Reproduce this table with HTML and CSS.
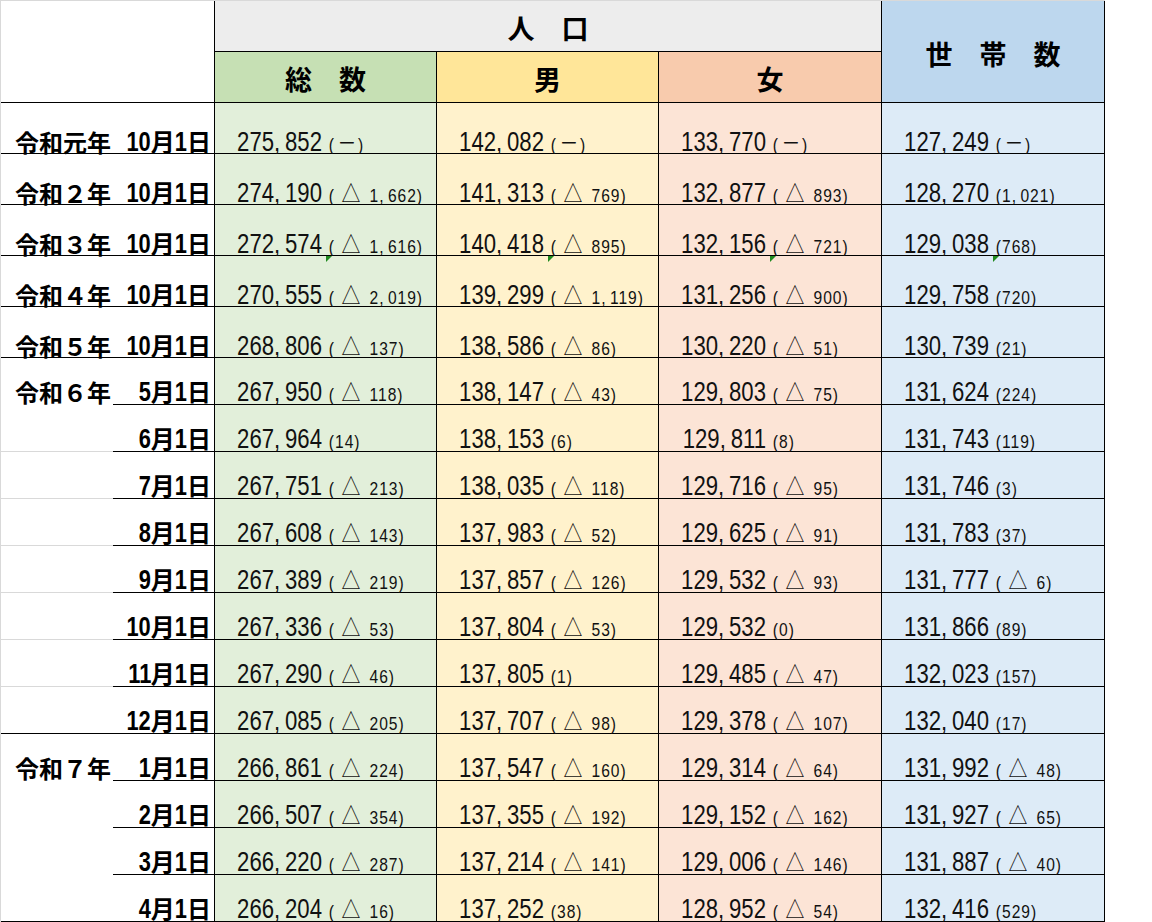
FILE: index.html
```html
<!DOCTYPE html>
<html lang="ja">
<head>
<meta charset="utf-8">
<title>人口・世帯数の推移</title>
<link rel="stylesheet" href="styles.css">
</head>
<body>
<div class="sheet">
  <div class="corner"></div>
  <div class="hd pop">人　口</div>
  <div class="hd hh">世　帯　数</div>
  <div class="hd tot">総　数</div>
  <div class="hd m">男</div>
  <div class="hd f">女</div>

  <div class="yr">令和元年</div><div class="dt"><span class="dg dg2">10</span>月<span class="dg dg1">1</span>日</div>
  <div class="d g"><span class="n">275<i>,</i>852</span><span class="p">(<b class="z">－</b>)</span></div>
  <div class="d y"><span class="n">142<i>,</i>082</span><span class="p">(<b class="z">－</b>)</span></div>
  <div class="d r"><span class="n">133<i>,</i>770</span><span class="p">(<b class="z">－</b>)</span></div>
  <div class="d b"><span class="n">127<i>,</i>249</span><span class="p">(<b class="z">－</b>)</span></div>

  <div class="yr">令和２年</div><div class="dt"><span class="dg dg2">10</span>月<span class="dg dg1">1</span>日</div>
  <div class="d g"><span class="n">274<i>,</i>190</span><span class="p">(<b class="t">△</b>1<i>,</i>662)</span></div>
  <div class="d y"><span class="n">141<i>,</i>313</span><span class="p">(<b class="t">△</b>769)</span></div>
  <div class="d r"><span class="n">132<i>,</i>877</span><span class="p">(<b class="t">△</b>893)</span></div>
  <div class="d b"><span class="n">128<i>,</i>270</span><span class="p">(1<i>,</i>021)</span></div>

  <div class="yr">令和３年</div><div class="dt"><span class="dg dg2">10</span>月<span class="dg dg1">1</span>日</div>
  <div class="d g"><span class="n">272<i>,</i>574</span><span class="p">(<b class="t">△</b>1<i>,</i>616)</span></div>
  <div class="d y"><span class="n">140<i>,</i>418</span><span class="p">(<b class="t">△</b>895)</span></div>
  <div class="d r"><span class="n">132<i>,</i>156</span><span class="p">(<b class="t">△</b>721)</span></div>
  <div class="d b"><span class="n">129<i>,</i>038</span><span class="p">(768)</span></div>

  <div class="yr">令和４年</div><div class="dt"><span class="dg dg2">10</span>月<span class="dg dg1">1</span>日</div>
  <div class="d g e"><span class="n">270<i>,</i>555</span><span class="p">(<b class="t">△</b>2<i>,</i>019)</span></div>
  <div class="d y e"><span class="n">139<i>,</i>299</span><span class="p">(<b class="t">△</b>1<i>,</i>119)</span></div>
  <div class="d r e"><span class="n">131<i>,</i>256</span><span class="p">(<b class="t">△</b>900)</span></div>
  <div class="d b e"><span class="n">129<i>,</i>758</span><span class="p">(720)</span></div>

  <div class="yr">令和５年</div><div class="dt"><span class="dg dg2">10</span>月<span class="dg dg1">1</span>日</div>
  <div class="d g"><span class="n">268<i>,</i>806</span><span class="p">(<b class="t">△</b>137)</span></div>
  <div class="d y"><span class="n">138<i>,</i>586</span><span class="p">(<b class="t">△</b>86)</span></div>
  <div class="d r"><span class="n">130<i>,</i>220</span><span class="p">(<b class="t">△</b>51)</span></div>
  <div class="d b"><span class="n">130<i>,</i>739</span><span class="p">(21)</span></div>

  <div class="yr nb mo">令和６年</div><div class="dt mo"><span class="dg dg1">5</span>月<span class="dg dg1">1</span>日</div>
  <div class="d g mo"><span class="n">267<i>,</i>950</span><span class="p">(<b class="t">△</b>118)</span></div>
  <div class="d y mo"><span class="n">138<i>,</i>147</span><span class="p">(<b class="t">△</b>43)</span></div>
  <div class="d r mo"><span class="n">129<i>,</i>803</span><span class="p">(<b class="t">△</b>75)</span></div>
  <div class="d b mo"><span class="n">131<i>,</i>624</span><span class="p">(224)</span></div>

  <div class="yr gb mo"></div><div class="dt mo"><span class="dg dg1">6</span>月<span class="dg dg1">1</span>日</div>
  <div class="d g mo"><span class="n">267<i>,</i>964</span><span class="p">(14)</span></div>
  <div class="d y mo"><span class="n">138<i>,</i>153</span><span class="p">(6)</span></div>
  <div class="d r mo"><span class="n">129<i>,</i>811</span><span class="p">(8)</span></div>
  <div class="d b mo"><span class="n">131<i>,</i>743</span><span class="p">(119)</span></div>

  <div class="yr gb mo"></div><div class="dt mo"><span class="dg dg1">7</span>月<span class="dg dg1">1</span>日</div>
  <div class="d g mo"><span class="n">267<i>,</i>751</span><span class="p">(<b class="t">△</b>213)</span></div>
  <div class="d y mo"><span class="n">138<i>,</i>035</span><span class="p">(<b class="t">△</b>118)</span></div>
  <div class="d r mo"><span class="n">129<i>,</i>716</span><span class="p">(<b class="t">△</b>95)</span></div>
  <div class="d b mo"><span class="n">131<i>,</i>746</span><span class="p">(3)</span></div>

  <div class="yr gb mo"></div><div class="dt mo"><span class="dg dg1">8</span>月<span class="dg dg1">1</span>日</div>
  <div class="d g mo"><span class="n">267<i>,</i>608</span><span class="p">(<b class="t">△</b>143)</span></div>
  <div class="d y mo"><span class="n">137<i>,</i>983</span><span class="p">(<b class="t">△</b>52)</span></div>
  <div class="d r mo"><span class="n">129<i>,</i>625</span><span class="p">(<b class="t">△</b>91)</span></div>
  <div class="d b mo"><span class="n">131<i>,</i>783</span><span class="p">(37)</span></div>

  <div class="yr gb mo"></div><div class="dt mo"><span class="dg dg1">9</span>月<span class="dg dg1">1</span>日</div>
  <div class="d g mo"><span class="n">267<i>,</i>389</span><span class="p">(<b class="t">△</b>219)</span></div>
  <div class="d y mo"><span class="n">137<i>,</i>857</span><span class="p">(<b class="t">△</b>126)</span></div>
  <div class="d r mo"><span class="n">129<i>,</i>532</span><span class="p">(<b class="t">△</b>93)</span></div>
  <div class="d b mo"><span class="n">131<i>,</i>777</span><span class="p">(<b class="t">△</b>6)</span></div>

  <div class="yr gb mo"></div><div class="dt mo"><span class="dg dg2">10</span>月<span class="dg dg1">1</span>日</div>
  <div class="d g mo"><span class="n">267<i>,</i>336</span><span class="p">(<b class="t">△</b>53)</span></div>
  <div class="d y mo"><span class="n">137<i>,</i>804</span><span class="p">(<b class="t">△</b>53)</span></div>
  <div class="d r mo"><span class="n">129<i>,</i>532</span><span class="p">(0)</span></div>
  <div class="d b mo"><span class="n">131<i>,</i>866</span><span class="p">(89)</span></div>

  <div class="yr gb mo"></div><div class="dt mo"><span class="dg dg2">11</span>月<span class="dg dg1">1</span>日</div>
  <div class="d g mo"><span class="n">267<i>,</i>290</span><span class="p">(<b class="t">△</b>46)</span></div>
  <div class="d y mo"><span class="n">137<i>,</i>805</span><span class="p">(1)</span></div>
  <div class="d r mo"><span class="n">129<i>,</i>485</span><span class="p">(<b class="t">△</b>47)</span></div>
  <div class="d b mo"><span class="n">132<i>,</i>023</span><span class="p">(157)</span></div>

  <div class="yr mo"></div><div class="dt mo"><span class="dg dg2">12</span>月<span class="dg dg1">1</span>日</div>
  <div class="d g mo"><span class="n">267<i>,</i>085</span><span class="p">(<b class="t">△</b>205)</span></div>
  <div class="d y mo"><span class="n">137<i>,</i>707</span><span class="p">(<b class="t">△</b>98)</span></div>
  <div class="d r mo"><span class="n">129<i>,</i>378</span><span class="p">(<b class="t">△</b>107)</span></div>
  <div class="d b mo"><span class="n">132<i>,</i>040</span><span class="p">(17)</span></div>

  <div class="yr nb mo">令和７年</div><div class="dt mo"><span class="dg dg1">1</span>月<span class="dg dg1">1</span>日</div>
  <div class="d g mo"><span class="n">266<i>,</i>861</span><span class="p">(<b class="t">△</b>224)</span></div>
  <div class="d y mo"><span class="n">137<i>,</i>547</span><span class="p">(<b class="t">△</b>160)</span></div>
  <div class="d r mo"><span class="n">129<i>,</i>314</span><span class="p">(<b class="t">△</b>64)</span></div>
  <div class="d b mo"><span class="n">131<i>,</i>992</span><span class="p">(<b class="t">△</b>48)</span></div>

  <div class="yr nb mo"></div><div class="dt mo"><span class="dg dg1">2</span>月<span class="dg dg1">1</span>日</div>
  <div class="d g mo"><span class="n">266<i>,</i>507</span><span class="p">(<b class="t">△</b>354)</span></div>
  <div class="d y mo"><span class="n">137<i>,</i>355</span><span class="p">(<b class="t">△</b>192)</span></div>
  <div class="d r mo"><span class="n">129<i>,</i>152</span><span class="p">(<b class="t">△</b>162)</span></div>
  <div class="d b mo"><span class="n">131<i>,</i>927</span><span class="p">(<b class="t">△</b>65)</span></div>

  <div class="yr nb mo"></div><div class="dt mo"><span class="dg dg1">3</span>月<span class="dg dg1">1</span>日</div>
  <div class="d g mo"><span class="n">266<i>,</i>220</span><span class="p">(<b class="t">△</b>287)</span></div>
  <div class="d y mo"><span class="n">137<i>,</i>214</span><span class="p">(<b class="t">△</b>141)</span></div>
  <div class="d r mo"><span class="n">129<i>,</i>006</span><span class="p">(<b class="t">△</b>146)</span></div>
  <div class="d b mo"><span class="n">131<i>,</i>887</span><span class="p">(<b class="t">△</b>40)</span></div>

  <div class="yr mo"></div><div class="dt mo"><span class="dg dg1">4</span>月<span class="dg dg1">1</span>日</div>
  <div class="d g mo"><span class="n">266<i>,</i>204</span><span class="p">(<b class="t">△</b>16)</span></div>
  <div class="d y mo"><span class="n">137<i>,</i>252</span><span class="p">(38)</span></div>
  <div class="d r mo"><span class="n">128<i>,</i>952</span><span class="p">(<b class="t">△</b>54)</span></div>
  <div class="d b mo"><span class="n">132<i>,</i>416</span><span class="p">(529)</span></div>
</div>
</body>
</html>
```
FILE: styles.css
```css
* {
  box-sizing: border-box;
  margin: 0;
  padding: 0;
}

body {
  margin: 0;
  background: #ffffff;
}

.sheet {
  display: grid;
  grid-template-columns: 112px 102px 222px 222px 223px 223px;
  grid-template-rows: 51px 51px repeat(5, 51px) repeat(12, 47px);
  width: max-content;
  border-top: 1px solid #d9d9d9;
  border-left: 1px solid #d9d9d9;
  color: #111111;
  font-family: "Liberation Sans", "Noto Sans CJK JP", sans-serif;
}

/* header */
.corner {
  grid-column: 1 / 3;
  grid-row: 1 / 3;
  border-right: 1px solid #000;
  border-bottom: 1px solid #000;
}

.hd {
  display: flex;
  align-items: center;
  justify-content: center;
  padding-top: 3px;
  font-family: "Noto Sans CJK JP", sans-serif;
  font-weight: 700;
  font-size: 27px;
  line-height: 1;
  color: #000;
  border-right: 1px solid #000;
  border-bottom: 1px solid #000;
}

.pop {
  grid-column: 3 / 6;
  background: #ededed;
}

.hh {
  grid-column: 6;
  grid-row: 1 / 3;
  background: #bdd7ee;
}

.tot { background: #c6e0b4; }
.m { background: #ffe699; }
.f { background: #f8cbad; }

/* row labels */
.yr,
.dt {
  display: flex;
  align-items: flex-end;
  font-family: "Noto Sans CJK JP", sans-serif;
  font-weight: 700;
  font-size: 24px;
  line-height: 22px;
  color: #000;
  border-bottom: 1px solid #000;
}

.yr {
  padding-left: 14px;
}

.yr.nb { border-bottom-color: transparent; }
.yr.gb { border-bottom-color: #d9d9d9; }

.dt {
  justify-content: flex-end;
  align-items: baseline;
  flex-wrap: wrap;
  align-content: flex-end;
  padding-right: 3px;
  border-right: 1px solid #000;
}

/* condensed digits inside the date labels */
.dg {
  display: inline-block;
  font-family: "Liberation Sans", sans-serif;
  font-size: 28px;
  line-height: 22px;
  transform: scaleX(0.78);
}

.dg1 { margin: 0 -1.7px; }
.dg2 { margin: 0 -3.4px; }

/* data cells */
.d {
  position: relative;
  display: flex;
  flex-wrap: wrap;
  align-content: flex-end;
  align-items: baseline;
  border-right: 1px solid #000;
  border-bottom: 1px solid #000;
}

.mo { padding-bottom: 1px; }

.g { background: #e2efda; }
.y { background: #fff2cc; }
.r { background: #fce4d6; }
.b { background: #ddebf7; }

.n {
  width: 111px;
  padding-right: 4px;
  text-align: right;
  white-space: nowrap;
  font-size: 27px;
  line-height: 22px;
  transform: scaleX(0.82);
  transform-origin: 107px 0;
}

.n i,
.p i {
  font-style: normal;
  padding-right: 0.22em;
}

.p {
  width: 100px;
  padding-left: 3.5px;
  white-space: nowrap;
  font-size: 19px;
  line-height: 14px;
  letter-spacing: 1.2px;
  transform: scaleX(0.82);
  transform-origin: 0 0;
}

.p b {
  font-family: "Noto Sans CJK JP", sans-serif;
  font-weight: 400;
  font-size: 23px;
  letter-spacing: 0;
}

.p .t { margin: 0 11px 0 8px; }
.p .z { margin: 0 2px 0 3px; }

/* "number stored as text" indicator */
.e::before {
  content: "";
  position: absolute;
  left: 111px;
  top: 0;
  border-top: 6px solid #1f8a1f;
  border-right: 6px solid transparent;
}
```
